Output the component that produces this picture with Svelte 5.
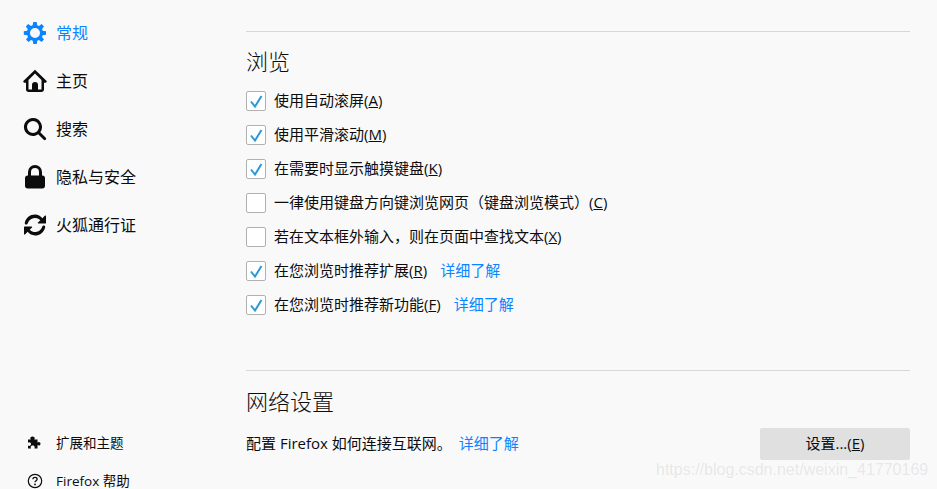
<script>
  const navItems = [
    { label: '常规', icon: 'gear', active: true },
    { label: '主页', icon: 'home' },
    { label: '搜索', icon: 'search' },
    { label: '隐私与安全', icon: 'lock' },
    { label: '火狐通行证', icon: 'sync' }
  ];

  const options = [
    { text: '使用自动滚屏', key: 'A', checked: true },
    { text: '使用平滑滚动', key: 'M', checked: true },
    { text: '在需要时显示触摸键盘', key: 'K', checked: true },
    { text: '一律使用键盘方向键浏览网页（键盘浏览模式）', key: 'C', checked: false },
    { text: '若在文本框外输入，则在页面中查找文本', key: 'X', checked: false },
    { text: '在您浏览时推荐扩展', key: 'R', checked: true, more: true },
    { text: '在您浏览时推荐新功能', key: 'F', checked: true, more: true }
  ];
</script>

<div class="page">
  <aside class="sidebar">
    <nav class="nav">
      {#each navItems as item}
        <div class="nav-item" class:active={item.active}>
          <svg class="nav-icon" viewBox="0 0 24 24" fill="currentColor">
            {#if item.icon === 'gear'}
              <path fill-rule="evenodd" d="M10.300 1h3.400l.5 3.300 1.700.7 2.700-2 2.400 2.400-2 2.700.7 1.700 3.300.5v3.400l-3.300.5-.7 1.700 2 2.700-2.400 2.400-2.700-2-1.700.7-.5 3.300h-3.400l-.5-3.300-1.700-.7-2.700 2-2.400-2.400 2-2.700-.7-1.700L.8 13.700v-3.400l3.300-.5.7-1.700-2-2.700 2.400-2.400 2.700 2 1.700-.7zM12 7a5 5 0 1 0 0 10 5 5 0 0 0 0-10z"/>
            {:else if item.icon === 'home'}
              <path fill-rule="evenodd" d="M12 .8.600 11.800c-.7.7-.3 1.900.8 1.900H3v6.800C3 22 4.200 23 5.500 23h13c1.300 0 2.500-1 2.500-2.500v-6.800h1.600c1.100 0 1.500-1.200.8-1.900zM12 4.500l6.500 6.400v9c0 .4-.2.600-.6.600H15v-4.600a3 3 0 0 0-6 0v4.600H6.100c-.4 0-.6-.2-.6-.6v-9z"/>
              <rect x="10.500" y="15.500" width="3" height="5.500"/>
            {:else if item.icon === 'search'}
              <path fill-rule="evenodd" d="M10 1a9 9 0 1 0 5.200 16.300l5.500 5.500a1.500 1.500 0 0 0 2.100-2.100l-5.500-5.500A9 9 0 0 0 10 1zm0 3a6 6 0 1 1 0 12 6 6 0 0 1 0-12z"/>
            {:else if item.icon === 'lock'}
              <path fill-rule="evenodd" d="M12 0a7 7 0 0 0-7 7v3.500H4.500C3.100 10.500 2 11.600 2 13v8c0 1.400 1.100 2.500 2.500 2.500h15c1.400 0 2.500-1.100 2.500-2.500v-8c0-1.400-1.100-2.500-2.500-2.500H19V7a7 7 0 0 0-7-7zm0 3a4 4 0 0 1 4 4v3.500H8V7a4 4 0 0 1 4-4z"/>
            {:else}
              <path d="M12 1.500c-5 0-9.200 3.500-10.200 8.300-.2 1 .5 1.800 1.400 1.800.8 0 1.400-.5 1.600-1.300A7.500 7.500 0 0 1 17.300 7.300L15 9.600c-.4.400-.1 1 .4 1h7c.4 0 .6-.3.600-.6V3c0-.5-.7-.8-1-.4l-2.600 2.600A10.500 10.500 0 0 0 12 1.500z"/>
              <path d="M12 22.500c5 0 9.200-3.500 10.200-8.300.2-1-.5-1.800-1.400-1.800-.8 0-1.400.5-1.600 1.300A7.500 7.500 0 0 1 6.700 16.700L9 14.400c.4-.4.100-1-.4-1h-7c-.4 0-.6.300-.6.600v7c0 .5.700.8 1 .4l2.600-2.600a10.500 10.500 0 0 0 7.400 3.700z"/>
            {/if}
          </svg>
          <span class="label">{item.label}</span>
        </div>
      {/each}
    </nav>
    <div class="foot">
      <div class="foot-item">
        <svg class="foot-icon" viewBox="0 0 16 16" fill="currentColor">
          <path d="M5.500 1.500c1.300 0 2.200.8 2.200 1.800 0 .5-.3.900-.5 1.200h3.300v3c.4-.3.800-.5 1.300-.5 1 0 1.700.8 1.700 1.800s-.7 1.800-1.700 1.800c-.5 0-.9-.2-1.300-.5v3.400H7.200c.3-.4.500-.8.500-1.300 0-1-.9-1.700-2-1.700s-2 .7-2 1.700c0 .5.200.9.500 1.300H1V10.400c.4.300.8.500 1.200.5 1 0 1.800-.8 1.800-1.800S3.200 7.300 2.200 7.300c-.4 0-.8.200-1.200.5V4.500h2.800c-.2-.3-.5-.7-.5-1.200 0-1 .9-1.800 2.200-1.800z"/>
        </svg>
        <span class="label">扩展和主题</span>
      </div>
      <div class="foot-item">
        <svg class="foot-icon" viewBox="0 0 16 16">
          <circle cx="8" cy="8" r="6.700" fill="none" stroke="currentColor" stroke-width="1.200"/>
          <path d="M5.900 6.300c0-1.200 1-1.900 2.100-1.900s2.100.7 2.100 1.800c0 1.500-2.100 1.500-2.100 3.100" fill="none" stroke="currentColor" stroke-width="1.300"/>
          <circle cx="8" cy="11.400" r=".9" fill="currentColor"/>
        </svg>
        <span class="label">Firefox 帮助</span>
      </div>
    </div>
  </aside>

  <main class="content">
    <section class="section">
      <h2>浏览</h2>
      <div class="options">
        {#each options as opt}
          <div class="option">
            <span class="checkbox">
              {#if opt.checked}
                <svg viewBox="0 0 20 20" width="20" height="20">
                  <path d="M5 10.500 9 15.500 15.500 5" fill="none" stroke="#2a98d8" stroke-width="2"/>
                </svg>
              {/if}
            </span>
            <span class="text">{opt.text}(<u>{opt.key}</u>)</span>
            {#if opt.more}<a href="#more" class="more text">详细了解</a>{/if}
          </div>
        {/each}
      </div>
    </section>

    <section class="section network">
      <h2>网络设置</h2>
      <div class="network-row">
        <span class="text">配置 Firefox 如何连接互联网。<a href="#more" class="more inline">详细了解</a></span>
        <button class="settings"><span class="text">设置...(<u>E</u>)</span></button>
      </div>
    </section>
  </main>

  <div class="watermark">https://blog.csdn.net/weixin_41770169</div>
</div>

<style>
  :global(body) {
    margin: 0;
    background: #f9f9fa;
  }

  .page {
    position: relative;
    display: flex;
    height: 489px;
    overflow: hidden;
    background: #f9f9fa;
    color: #0c0c0d;
    font-family: "Open Sans", "Noto Sans CJK SC", sans-serif;
    font-size: 15px;
  }

  .sidebar {
    width: 246px;
    flex: none;
    display: flex;
    flex-direction: column;
    justify-content: space-between;
    padding: 9px 0 0 23px;
    box-sizing: border-box;
  }

  .nav-item {
    display: flex;
    align-items: center;
    gap: 9px;
    height: 48px;
    font-size: 16px;
  }

  .nav-item.active {
    color: #0a84ff;
  }

  .nav-icon {
    width: 24px;
    height: 24px;
    flex: none;
  }

  /* the fallback font sits low in its line box, lift the labels a bit */
  .label {
    padding-bottom: 2px;
  }

  .text {
    display: inline-block;
    padding-bottom: 4px;
  }

  .foot {
    margin-bottom: -11px;
    padding-left: 4px;
  }

  .foot-item {
    display: flex;
    align-items: center;
    gap: 13px;
    height: 38px;
    font-size: 13.500px;
  }

  .foot-icon {
    width: 16px;
    height: 16px;
    flex: none;
  }

  .content {
    width: 664px;
    flex: none;
    padding-top: 31px;
  }

  .section {
    border-top: 1px solid #d7d7db;
    padding-top: 16px;
  }

  h2 {
    margin: 0;
    height: 30px;
    line-height: 26px;
    font-size: 22px;
    font-weight: 300;
  }

  .options {
    margin-top: 6px;
  }

  .option {
    display: flex;
    align-items: center;
    height: 34px;
  }

  .checkbox {
    width: 18px;
    height: 18px;
    flex: none;
    margin-right: 8px;
    position: relative;
    border: 1px solid #b1b1b3;
    border-radius: 2px;
    background: #fff;
  }

  .checkbox svg {
    position: absolute;
    left: -1px;
    top: -1px;
  }

  .more {
    margin-left: 13px;
    color: #0a84ff;
    text-decoration: none;
  }

  .more.inline {
    margin-left: 7px;
  }

  .network {
    margin-top: 48px;
    padding-top: 17px;
  }

  .network-row {
    margin-top: 10px;
    display: flex;
    justify-content: space-between;
    align-items: center;
  }

  .settings {
    width: 150px;
    height: 32px;
    border: none;
    border-radius: 2px;
    background: #e0e0e1;
    color: #0c0c0d;
    font: inherit;
    padding: 0;
  }

  .watermark {
    position: absolute;
    left: 656px;
    top: 461px;
    font-family: "Liberation Sans", sans-serif;
    font-size: 16px;
    color: rgba(120, 120, 120, 0.15);
  }
</style>
